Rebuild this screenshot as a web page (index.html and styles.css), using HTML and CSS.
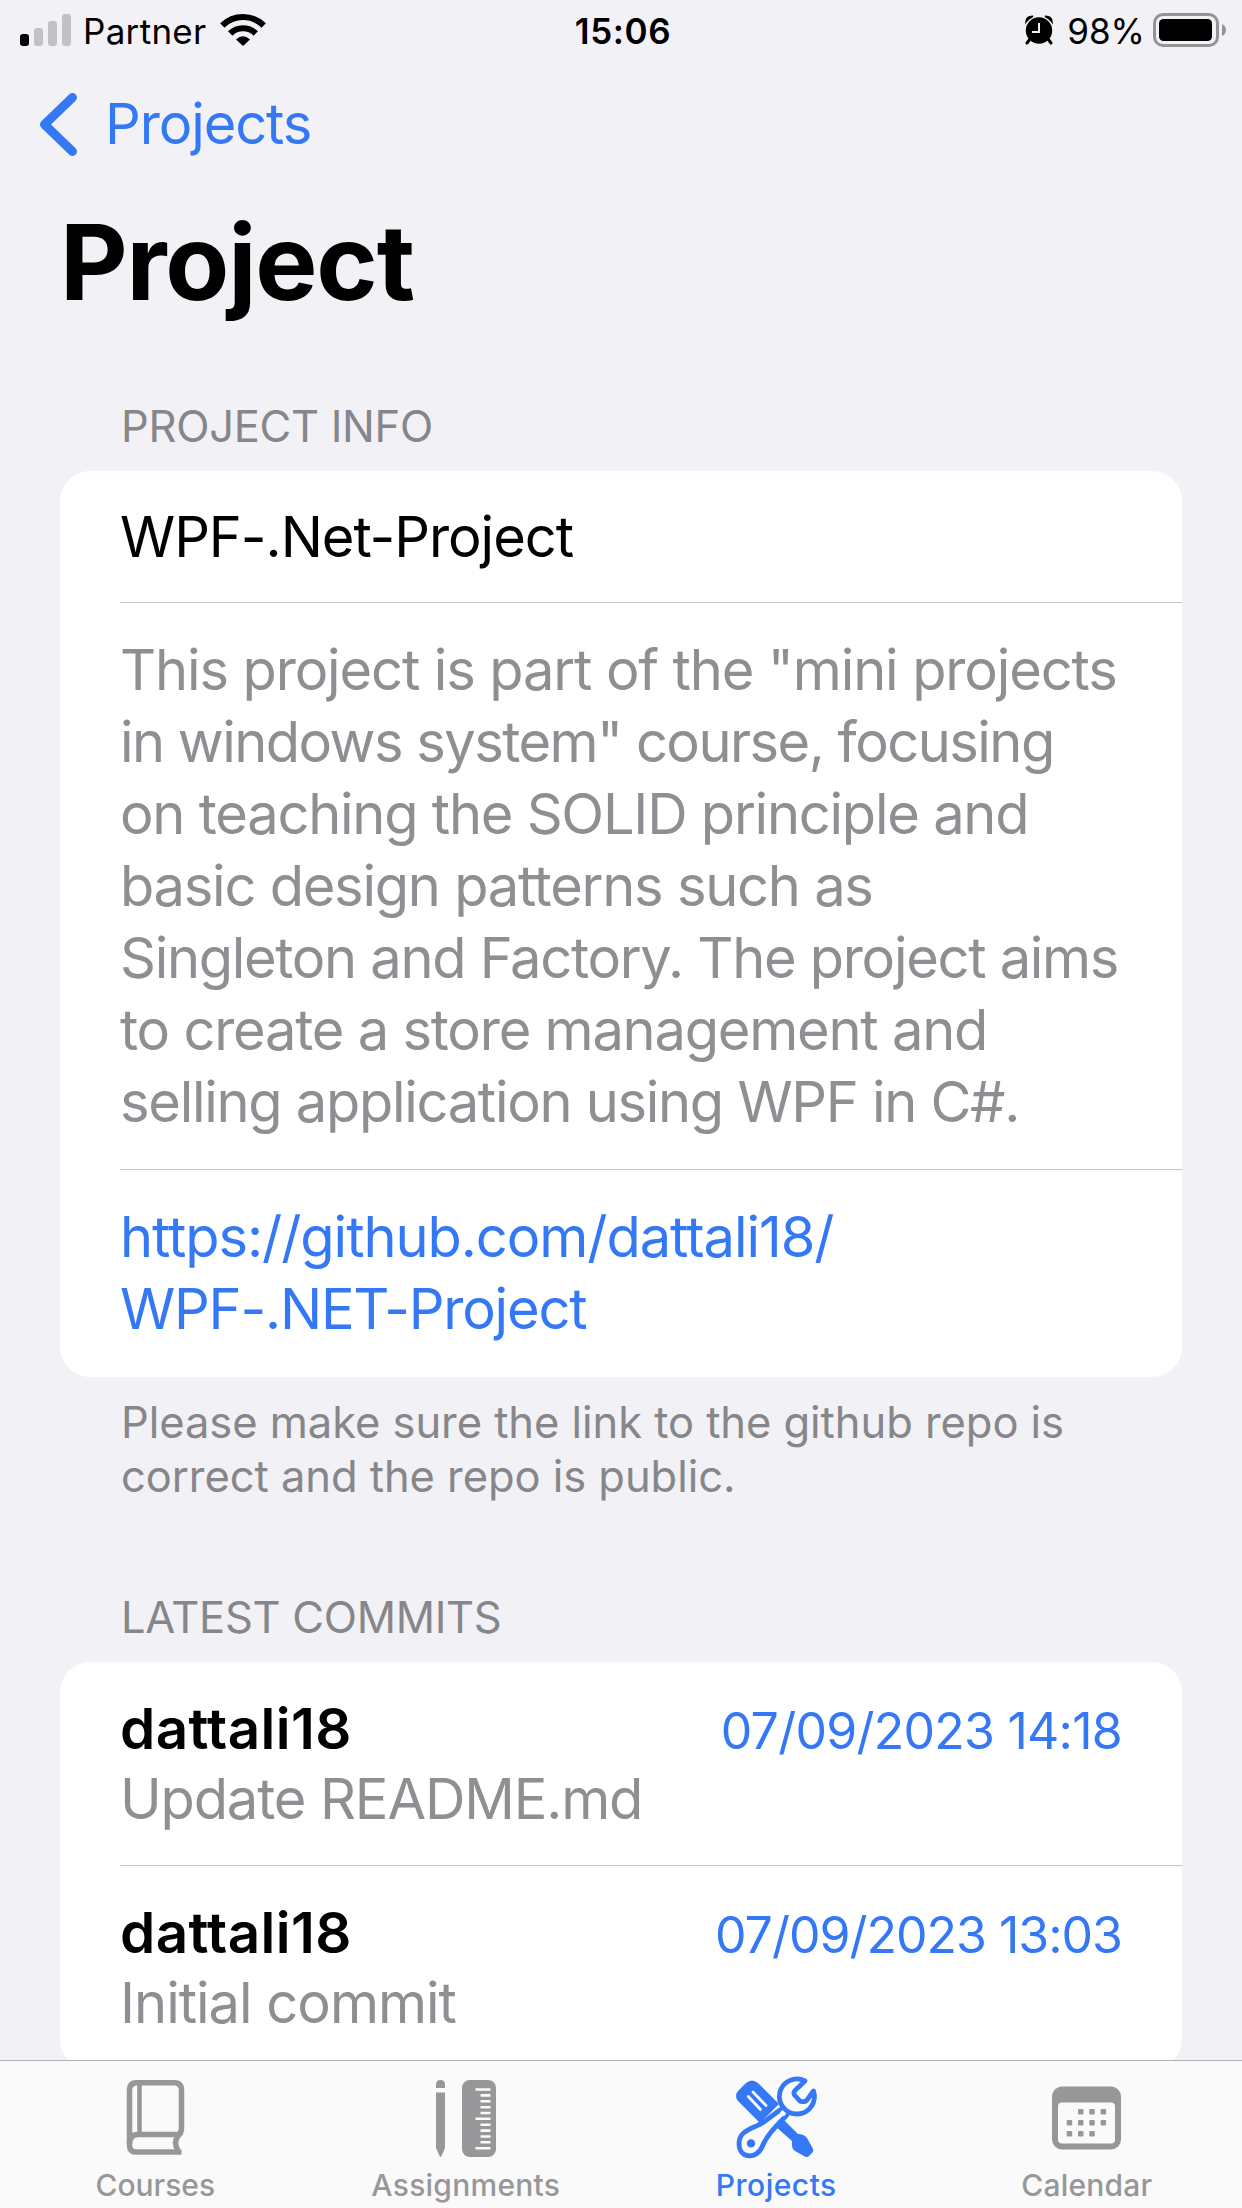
FILE: index.html
```html
<!DOCTYPE html>
<html lang="en">
<head>
<meta charset="utf-8">
<title>Project</title>
<link rel="stylesheet" href="styles.css">
</head>
<body>
<div class="screen">
  <header class="status">
    <div class="status-side">
      <svg class="signal" width="51" height="32" viewBox="0 0 51 32"><rect y="20" width="9" height="12" rx="3"/><g fill="#c2c1c6"><rect x="14" y="14" width="9" height="18" rx="3"/><rect x="28" y="7" width="9" height="25" rx="3"/><rect x="42" width="9" height="32" rx="3"/></g></svg>
      <span class="carrier">Partner</span>
      <svg class="wifi" width="46" height="33" viewBox="0 0 46 33"><g fill="none" stroke="#000" stroke-width="6.2"><path d="M2.3 12.5A29.500 29.500 0 0 1 43.700 12.500"/><path d="M10.200 20.500A18.200 18.200 0 0 1 35.800 20.500"/></g><path d="M16 26.500Q23 20 30 26.500L23 33z"/></svg>
    </div>
    <div class="clock">15:06</div>
    <div class="status-side right">
      <svg class="alarm" width="28" height="30" viewBox="0 0 28 30"><circle cx="14" cy="15.500" r="13.200"/><path d="M1 7Q1 1 8 1.200Q3 3.500 1 7zM27 7Q27 1 20 1.200Q25 3.500 27 7z" stroke="#000" stroke-width="1.500"/><path d="M5 24l-3 4M23 24l3 4" stroke="#000" stroke-width="3" stroke-linecap="round"/><path d="M14 8v9H7" fill="none" stroke="#f2f1f6" stroke-width="2"/></svg>
      <span class="percent">98%</span>
      <svg class="battery" width="73" height="34" viewBox="0 0 73 34"><rect x="1.500" y="1.500" width="63" height="31" rx="8.500" fill="none" stroke="#949498" stroke-width="3"/><rect x="6" y="6" width="53" height="22" rx="4.500"/><path d="M69 11Q73 13 73 17T69 23z" fill="#949498"/></svg>
    </div>
  </header>

  <nav class="back">
    <svg width="37" height="63" viewBox="0 0 37 63"><path d="M32.500 4.500L4.500 31.500L32.500 58.500" fill="none" stroke="#3478f6" stroke-width="9" stroke-linecap="round" stroke-linejoin="round"/></svg>
    <span class="back-label">Projects</span>
  </nav>
  <h1 class="title">Project</h1>

  <main class="content">
    <h2 class="heading">PROJECT INFO</h2>
    <section class="card">
      <div class="row name">WPF-.Net-Project</div>
      <p class="row about">
        <span class="line l1">This project is part of the "mini projects</span>
        <span class="line l2">in windows system" course, focusing</span>
        <span class="line l3">on teaching the SOLID principle and</span>
        <span class="line l4">basic design patterns such as</span>
        <span class="line l5">Singleton and Factory. The project aims</span>
        <span class="line l6">to create a store management and</span>
        <span class="line l7">selling application using WPF in C#.</span>
      </p>
      <div class="row link">
        <span class="line k1">https://github.com/dattali18/</span>
        <span class="line k2">WPF-.NET-Project</span>
      </div>
    </section>
    <p class="footnote"><span class="line">Please make sure the link to the github repo is</span><span class="line">correct and the repo is public.</span></p>

    <h2 class="heading">LATEST COMMITS</h2>
    <section class="card">
      <article class="row commit">
        <div class="commit-top"><span class="author">dattali18</span><time class="date d1">07/09/2023 14:18</time></div>
        <div class="message m1">Update README.md</div>
      </article>
      <article class="row commit">
        <div class="commit-top"><span class="author">dattali18</span><time class="date d2">07/09/2023 13:03</time></div>
        <div class="message m2">Initial commit</div>
      </article>
    </section>
  </main>

  <nav class="tabs">
    <div class="tab">
      <svg width="60" height="80" viewBox="0 0 60 80"><g fill="none" stroke="currentColor" stroke-width="5.500"><path d="M56.500 72H11Q4.500 72 4.500 65V10Q4.500 2.700 12 2.700H49Q56.500 2.700 56.500 10V48Q56.500 53 53 56Q48 63 53 70"/><path d="M4.500 64Q4.500 54.500 13 54.500H54"/><path d="M14.500 3V55" stroke-width="4.500"/></g></svg>
      <span>Courses</span>
    </div>
    <div class="tab">
      <svg width="60" height="80" viewBox="0 0 60 80"><g fill="currentColor"><path d="M0 8V5Q0 0 4.500 0T9 5V8zM0 12.500H9V68L5.500 76Q4.500 78 3.500 76L0 68z"/><rect x="26" width="34" height="77" rx="8"/></g><path d="M39.500 9.500h15M44.500 15.400h10M44.500 21.300h10M44.500 27.200h10M44.500 33h10M39.500 38.800h15M44.500 44.700h10M44.500 50.600h10M44.500 56.500h10M44.500 62.300h10M39.500 68.200h15" stroke="#fafafb" stroke-width="2.600"/></svg>
      <span class="t2">Assignments</span>
    </div>
    <div class="tab active">
      <svg class="tools" width="82" height="80" viewBox="0 0 82 80"><g fill="currentColor"><path d="M3 21Q-1 16 3 11L11 3Q17 -2 23 3L44 24L25 43z"/><path d="M49 40L63 54Q69 54 72 58L78 69Q79 71 77 73L74 76Q72 78 69 76L60 71Q57 69 57 66V61L40 46z"/></g><path d="M13.300 16.500L25.500 29.500M18 12L31 25.500" stroke="#fafafb" stroke-width="2.800" stroke-linecap="round"/><path d="M70 1A17.500 17.500 0 1 0 78.500 11L72 20Q70.500 22 68 21.500Q65.500 22 64 20L59.500 15Q58 12.500 60.500 10Z" fill="#fafafb" stroke="currentColor" stroke-width="4.800" stroke-linejoin="round"/><path d="M45 30L28 42.500C19 48.500 4 50 4 63.500C4 79 22 79.500 27 67C31 57 38 49 51.500 35.500Z" fill="#fafafb" stroke="currentColor" stroke-width="4.800" stroke-linejoin="round"/><path d="M44.500 28.500L52 35.500" stroke="currentColor" stroke-width="3.500"/><path d="M46 31.500L50 35" stroke="#fafafb" stroke-width="4"/><circle cx="16" cy="63.400" r="4.200" fill="currentColor"/></svg>
      <span class="t3">Projects</span>
    </div>
    <div class="tab">
      <svg width="69" height="80" viewBox="0 0 69 80"><rect y="6.500" width="69" height="63" rx="10" fill="currentColor"/><rect x="6" y="22.500" width="57" height="41" rx="4" fill="#fafafb"/><g fill="currentColor"><rect x="26" y="29" width="5.500" height="5.500" rx="1"/><rect x="37.300" y="29" width="5.500" height="5.500" rx="1"/><rect x="48.600" y="29" width="5.500" height="5.500" rx="1"/><rect x="14.700" y="40" width="5.500" height="5.500" rx="1"/><rect x="26" y="40" width="5.500" height="5.500" rx="1"/><rect x="37.300" y="40" width="5.500" height="5.500" rx="1"/><rect x="48.600" y="40" width="5.500" height="5.500" rx="1"/><rect x="14.700" y="51" width="5.500" height="5.500" rx="1"/><rect x="26" y="51" width="5.500" height="5.500" rx="1"/><rect x="37.300" y="51" width="5.500" height="5.500" rx="1"/></g></svg>
      <span class="t4">Calendar</span>
    </div>
  </nav>
</div>
</body>
</html>
```
FILE: styles.css
```css
* { box-sizing: border-box; margin: 0; padding: 0; }
body { background: #f2f1f6; color: #000; font-family: Inter, "Liberation Sans", sans-serif; }
svg { display: block; flex: none; }
.screen { width: 1242px; height: 2208px; display: flex; flex-direction: column; overflow: hidden; }

.status { height: 62px; flex: none; padding: 0 16px 0 20px; display: grid; grid-template-columns: 1fr auto 1fr; }
.status-side { display: flex; align-items: flex-start; }
.right { justify-content: flex-end; }
.signal { margin-top: 14px; }
.carrier { width: 137px; font-size: 35px; line-height: 40px; letter-spacing: 0.3px; margin: 11px 0 0 12px; white-space: nowrap; }
.wifi { margin-top: 13px; }
.clock { font-size: 35px; line-height: 40px; letter-spacing: 0.6px; margin-top: 11px; font-weight: 600; }
.alarm { margin-top: 15px; }
.percent { font-size: 35px; line-height: 40px; margin: 11px 8px 0 14px; }
.battery { margin-top: 13px; }

.back { height: 124px; flex: none; padding: 31px 0 0 40px; display: flex; align-items: flex-start; color: #3478f6; }
.back-label { font-size: 56px; line-height: 72px; letter-spacing: -1.1px; margin: -5px 0 0 28px; }
.title { height: 196px; flex: none; padding: 14px 60px 0; font-size: 104.500px; line-height: 124px; letter-spacing: -1.2px; font-weight: 700; }

.content { flex: 1; min-height: 0; overflow: hidden; padding: 0 60px; }
.heading { height: 89px; padding: 17px 0 0 61px; font-size: 43.500px; line-height: 54px; letter-spacing: -0.300px; font-weight: 400; color: #86868b; white-space: nowrap; }
.card { background: #fff; border-radius: 30px; padding-left: 60px; }
.row + .row { border-top: 1px solid #c6c6c8; }
.line { display: block; width: max-content; white-space: nowrap; }
.name { height: 131px; padding-top: 30px; font-size: 56px; line-height: 72px; letter-spacing: -1.050px; }
.about { height: 567px; padding-top: 31px; font-size: 56px; line-height: 72px; color: #8e8e93; }
.l1 { letter-spacing: -1.130px; }
.l2 { letter-spacing: -1.520px; }
.l3 { letter-spacing: -1.240px; }
.l4 { letter-spacing: -1.250px; }
.l5 { letter-spacing: -1.300px; }
.l6 { letter-spacing: -1.230px; }
.l7 { letter-spacing: -1.290px; }
.link { height: 208px; padding-top: 31px; font-size: 56px; line-height: 72px; color: #3478f6; }
.k1 { letter-spacing: -1.050px; }
.k2 { letter-spacing: -1.200px; }
.footnote { height: 196px; padding: 18px 0 0 61px; font-size: 43.500px; line-height: 54px; letter-spacing: -0.050px; color: #86868b; }

.commit { height: 203px; padding: 32px 60px 0 0; }
.row + .commit { height: 204px; }
.commit-top { display: flex; justify-content: space-between; align-items: baseline; line-height: 70px; }
.author { font-size: 56.500px; font-weight: 600; letter-spacing: 0.400px; }
.date { font-size: 50px; color: #3478f6; }
.d1 { letter-spacing: -0.750px; }
.d2 { letter-spacing: -1px; }
.message { font-size: 56px; line-height: 70px; color: #8e8e93; width: max-content; margin-top: -2px; }
.m1 { letter-spacing: -1.130px; }
.m2 { letter-spacing: -1px; }

.tabs { height: 148px; flex: none; border-top: 1px solid #b2b2b5; background: #fafafb; display: grid; grid-template-columns: repeat(4, 1fr); padding-top: 19px; color: #979799; }
.tab { display: flex; flex-direction: column; align-items: center; font-size: 30px; line-height: 36px; font-weight: 500; gap: 7px; }
.tools { overflow: visible; }
.active { color: #3478f6; }
.t2 { letter-spacing: 0.250px; }
.t3 { letter-spacing: 0.500px; }
.t4 { letter-spacing: 0.200px; }
```
